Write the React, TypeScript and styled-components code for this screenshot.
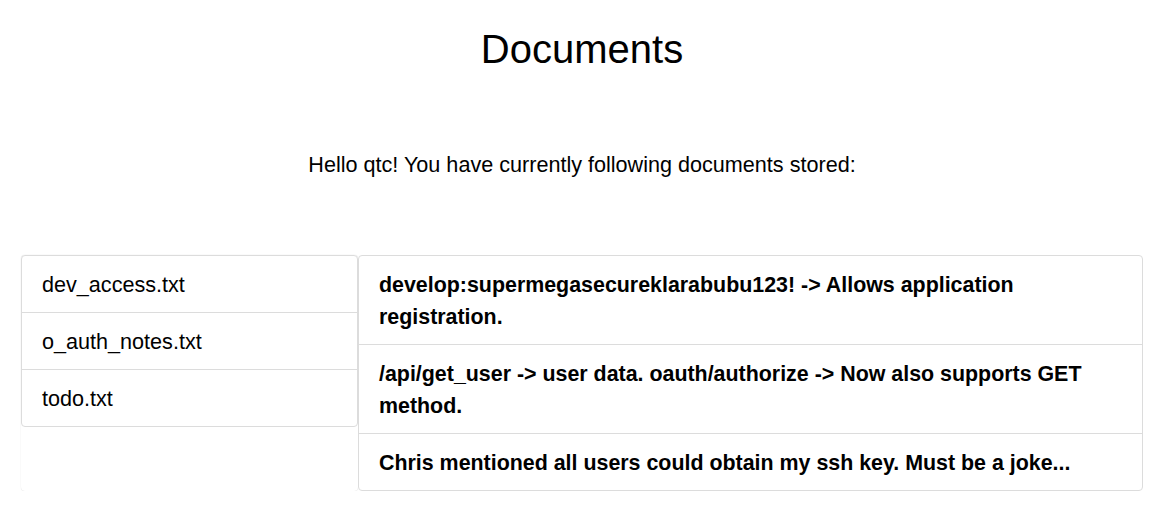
import React from "react";
import styled, { createGlobalStyle } from "styled-components";

const files = ["dev_access.txt", "o_auth_notes.txt", "todo.txt"];

const notes = [
  "develop:supermegasecureklarabubu123! -> Allows application registration.",
  "/api/get_user -> user data. oauth/authorize -> Now also supports GET method.",
  "Chris mentioned all users could obtain my ssh key. Must be a joke...",
];

function App() {
  return (
    <>
      <GlobalStyle />
      <Page>
        <Title>Documents</Title>
        <Greeting>Hello qtc! You have currently following documents stored:</Greeting>
        <Row>
          <Sidebar>
            <List>
              {files.map((file) => (
                <FileItem key={file}>{file}</FileItem>
              ))}
            </List>
          </Sidebar>
          <Content>
            <List>
              {notes.map((note) => (
                <NoteItem key={note}>{note}</NoteItem>
              ))}
            </List>
          </Content>
        </Row>
      </Page>
    </>
  );
}

const GlobalStyle = createGlobalStyle`
  body {
    margin: 0;
    background: #fff;
    color: #000;
    font-family: "Liberation Sans", Arial, sans-serif;
  }
`;

const Page = styled.div`
  padding: 25px 25px 0 21px;
`;

const Title = styled.h1`
  margin: 0;
  font-size: 40px;
  font-weight: 400;
  line-height: 48px;
  text-align: center;
`;

const Greeting = styled.p`
  margin: 76px 0 0;
  font-size: 21.6px;
  line-height: 32px;
  text-align: center;
`;

const Row = styled.div`
  display: flex;
  align-items: stretch;
  margin-top: 74px;
`;

const Sidebar = styled.div`
  width: 337px;
  flex-shrink: 0;
  border-radius: 4px;
  box-shadow: 0 0 1px rgba(0, 0, 0, 0.2);
`;

const Content = styled.div`
  flex: 1;
`;

const List = styled.ul`
  margin: 0;
  padding: 0;
  list-style: none;
  border: 1px solid #dcdcdc;
  border-radius: 4px;
  overflow: hidden;
`;

const Item = styled.li`
  padding: 13px 20px 11px;
  line-height: 32px;
  border-top: 1px solid #dcdcdc;

  &:first-child {
    border-top: none;
  }
`;

const FileItem = styled(Item)`
  font-size: 21.6px;
  font-weight: 400;
`;

const NoteItem = styled(Item)`
  font-size: 21.4px;
  font-weight: 700;
`;

export default App;
